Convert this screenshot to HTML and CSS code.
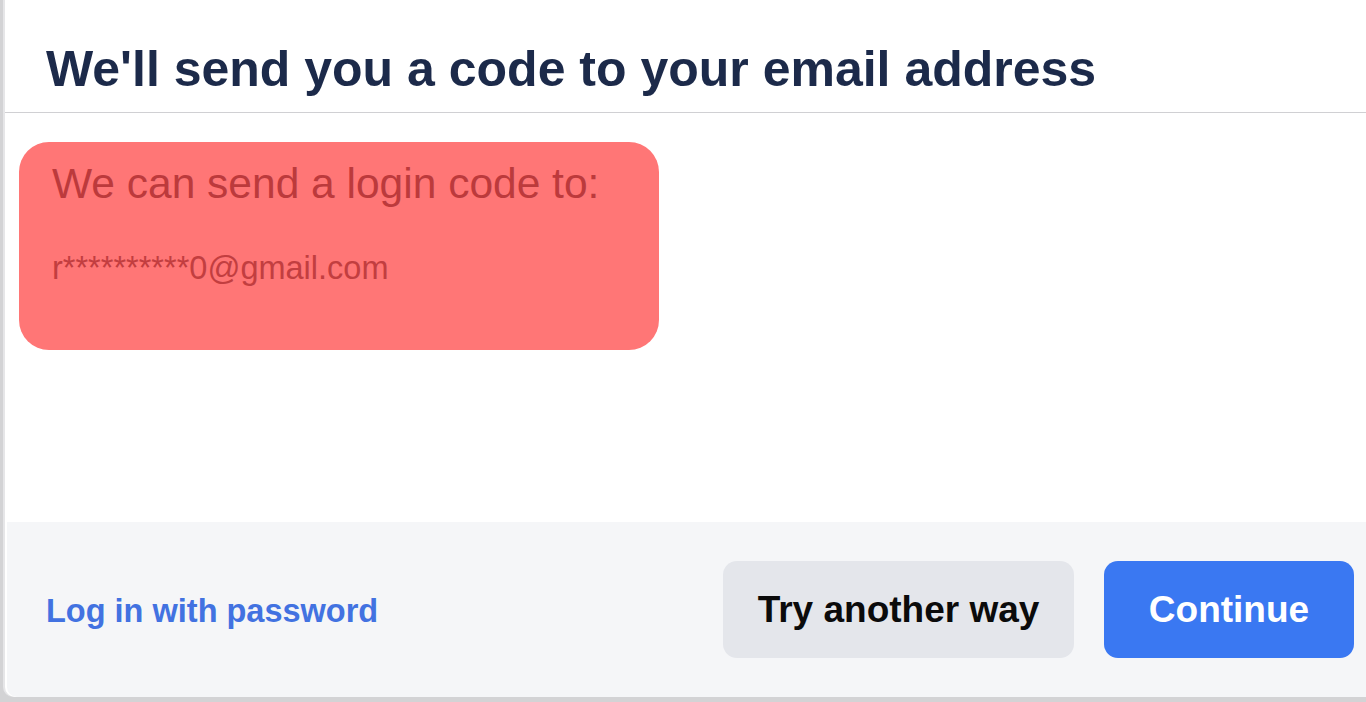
FILE: index.html
```html
<!DOCTYPE html>
<html lang="en">
<head>
<meta charset="utf-8">
<title>Send code</title>
<link rel="stylesheet" href="styles.css">
</head>
<body>
<div class="card">
  <header class="head">
    <h1 class="title">We'll send you a code to your email address</h1>
  </header>
  <main class="content">
    <div class="highlight">
      <p class="lead">We can send a login code to:</p>
      <p class="email">r<span class="stars">**********</span>0@gmail.com</p>
    </div>
  </main>
  <footer class="foot">
    <a class="link" href="#">Log in with password</a>
    <div class="actions">
      <button class="btn btn-secondary">Try another way</button>
      <button class="btn btn-primary">Continue</button>
    </div>
  </footer>
</div>
</body>
</html>
```

FILE: styles.css
```css
html, body {
  margin: 0;
  padding: 0;
  height: 702px;
  overflow: hidden;
}
body {
  background: #d3d3d5;
  font-family: "Liberation Sans", Arial, sans-serif;
}
.card {
  margin-left: 5px;
  height: 697px;
  background: #fff;
  border-bottom-left-radius: 10px;
  display: flex;
  flex-direction: column;
  box-shadow: -2px 0 0 #e6e6e8;
}
.head {
  height: 113px;
  border-bottom: 1px solid #d0d0d3;
  padding: 40px 0 0 41px;
  box-sizing: border-box;
  flex: none;
}
.title {
  margin: 0;
  font-size: 50px;
  line-height: 58px;
  font-weight: 700;
  color: #1c2a4a;
}
.content {
  flex: 1;
  padding: 29px 0 0 14px;
}
.highlight {
  width: 640px;
  height: 208px;
  box-sizing: border-box;
  background: #ff7676;
  border-radius: 30px;
  padding: 18px 0 0 33px;
}
.lead {
  margin: 0;
  font-size: 42.5px;
  color: #bc3a3c;
  line-height: 48px;
}
.email {
  margin: 41px 0 0;
  font-size: 32.5px;
  color: #c23e40;
  line-height: 38px;
}
.foot {
  flex: none;
  height: 175px;
  margin-left: 2px;
  background: #f5f6f8;
  border-bottom-left-radius: 10px;
  display: flex;
  align-items: center;
  justify-content: space-between;
  padding: 0 12px 0 39px;
}
.link {
  font-size: 32.5px;
  font-weight: 700;
  color: #4272e1;
  text-decoration: none;
  padding-top: 3px;
}
.actions {
  display: flex;
  gap: 30px;
}
.btn {
  height: 97px;
  border: none;
  border-radius: 14px;
  font-family: "Liberation Sans", Arial, sans-serif;
  font-size: 37px;
  font-weight: 700;
  padding: 0;
}
.btn-secondary {
  width: 351px;
  background: #e4e6eb;
  color: #0b0b0b;
}
.btn-primary {
  width: 250px;
  background: #3a78f2;
  color: #fff;
}
```
